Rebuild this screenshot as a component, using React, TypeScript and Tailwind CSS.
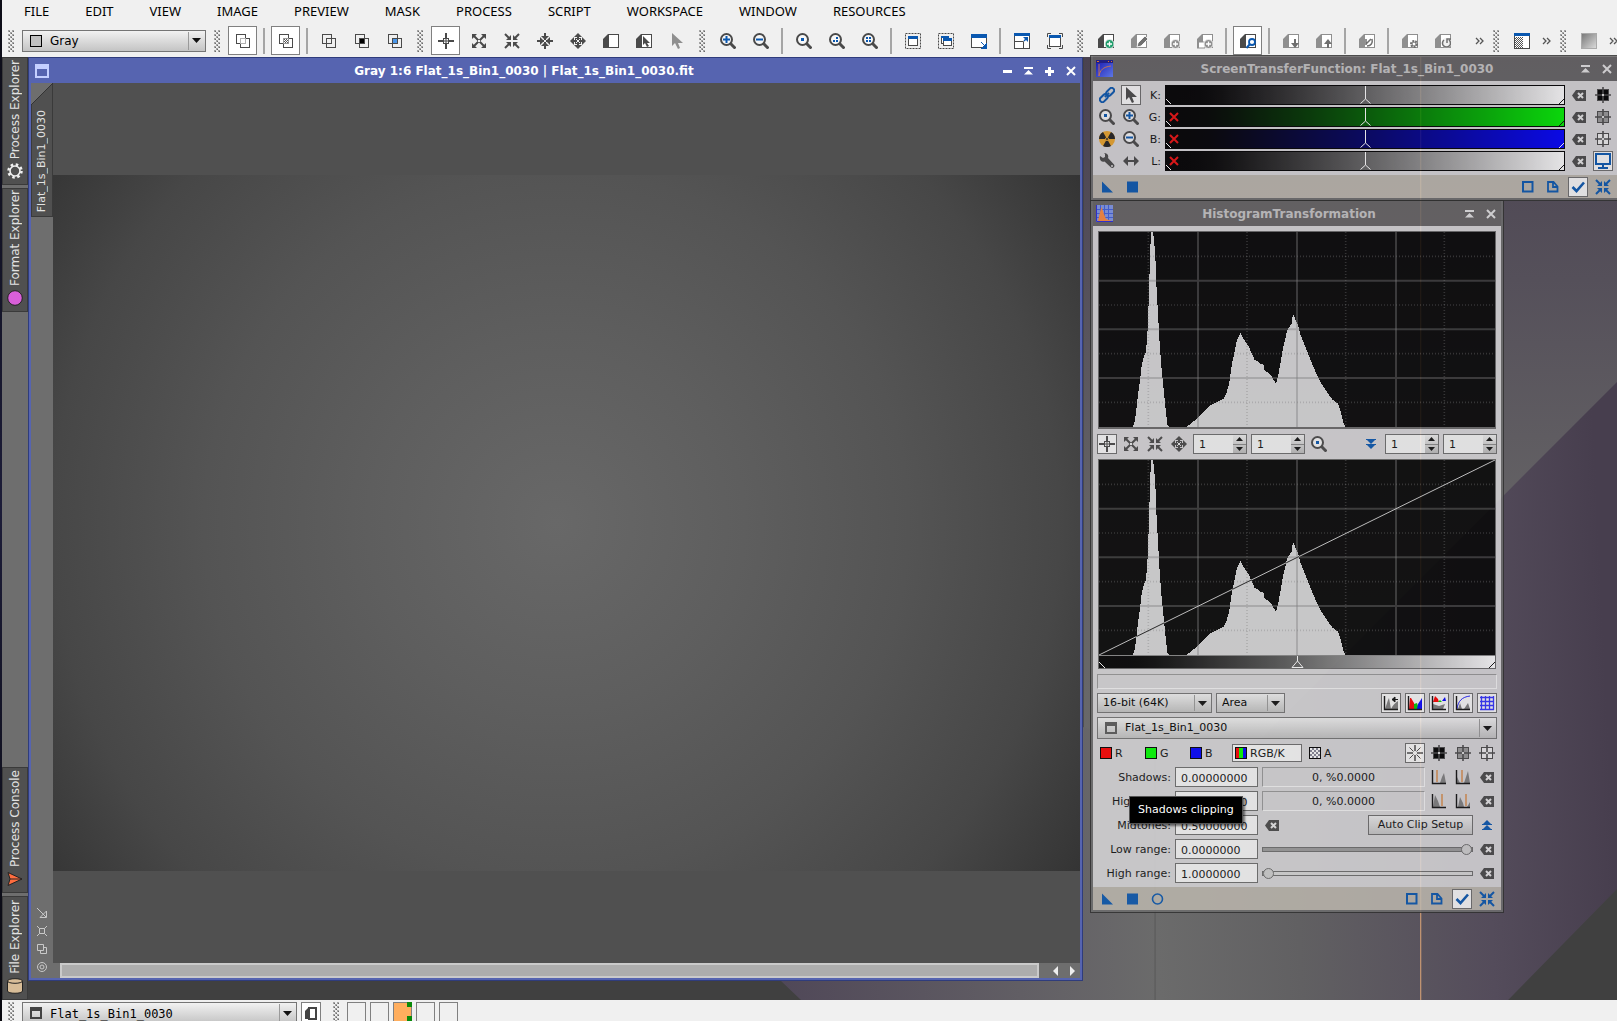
import type { ReactNode } from "react";

type IconProps = { color?: string };

function Svg({ children, size = 16 }: { children: ReactNode; size?: number }) {
  return (
    <svg width={size} height={size} viewBox="0 0 16 16" fill="none" aria-hidden="true" className="shrink-0">
      {children}
    </svg>
  );
}

const DARK = "#4a4a4a";
const BLUE = "#0a58b0";
const GREY = "#8f8f8f";

/* ---------- pointer / view icons ---------- */

function TargetIcon() {
  return (
    <Svg>
      <path d="M8 0v5M8 11v5M0 8h5M11 8h5" stroke={DARK} strokeWidth="2" />
      <path d="M8 4v8M4 8h8" stroke={DARK} />
      <rect x="5.5" y="5.5" width="5" height="5" stroke={DARK} />
    </Svg>
  );
}

function ExpandIcon() {
  return (
    <Svg>
      <path d="M1 1h5L1 6zM15 1v5l-5-5zM1 15v-5l5 5zM15 15h-5l5-5z" fill={DARK} />
      <path d="M3 3l10 10M13 3L3 13" stroke={DARK} strokeWidth="2" />
      <rect x="7" y="7" width="2" height="2" fill="#eee" />
    </Svg>
  );
}

function ContractIcon({ color = DARK }: IconProps) {
  return (
    <Svg>
      <path d="M7 7H2l5-5zM9 7V2l5 5zM7 9v5L2 9zM9 9h5l-5 5z" fill={color} />
      <path d="M1 1l4 4M15 1l-4 4M1 15l4-4M15 15l-4-4" stroke={color} strokeWidth="2" />
    </Svg>
  );
}

function PinchIcon() {
  return (
    <Svg>
      <path d="M8 7L4 3h8zM8 9l4 4H4zM7 8l-4 4V4zM9 8l4-4v8z" fill={DARK} />
      <path d="M8 0v16M0 8h16" stroke={DARK} strokeWidth="2" />
      <rect x="7" y="7" width="2" height="2" fill="#eee" />
    </Svg>
  );
}

function MoveIcon() {
  return (
    <Svg>
      <path d="M8 0l4 4H4zM8 16l-4-4h8zM0 8l4-4v8zM16 8l-4 4V4z" fill={DARK} />
      <path d="M8 3v10M3 8h10" stroke={DARK} strokeWidth="2" />
      <rect x="5.5" y="5.5" width="5" height="5" stroke={DARK} />
      <rect x="7" y="7" width="2" height="2" fill="#eee" />
    </Svg>
  );
}

function ArrowIcon({ color = DARK }: IconProps) {
  return (
    <Svg>
      <path d="M3 0v13l3-3 3 6 2-1-2-5h5z" fill={color} />
    </Svg>
  );
}

function ZoomIcon({ children }: { children?: ReactNode }) {
  return (
    <Svg>
      <circle cx="6.5" cy="6.5" r="5.5" fill="#f8f8f8" stroke={DARK} strokeWidth="2" />
      <path d="M10.5 10.5l5 5" stroke={DARK} strokeWidth="3" />
      {children}
    </Svg>
  );
}

const ZoomInIcon = () => (
  <ZoomIcon>
    <path d="M6.5 3v7M3 6.5h7" stroke={BLUE} strokeWidth="2" />
  </ZoomIcon>
);
const ZoomOutIcon = () => (
  <ZoomIcon>
    <path d="M3 6.5h7" stroke={BLUE} strokeWidth="2" />
  </ZoomIcon>
);
const ZoomOneIcon = () => (
  <ZoomIcon>
    <rect x="5" y="5" width="3" height="3" fill={BLUE} />
  </ZoomIcon>
);
const ZoomHalfIcon = () => (
  <ZoomIcon>
    <path d="M4 7h2v2H4zM7 4h2v2H7zM7 7h2v2H7z" fill={BLUE} />
  </ZoomIcon>
);
const ZoomFourIcon = () => (
  <ZoomIcon>
    <path d="M4 4h2v2H4zM7 4h2v2H7zM4 7h2v2H4zM7 7h2v2H7z" fill={BLUE} />
  </ZoomIcon>
);

function MaskIcon({ fill, inner = DARK }: { fill: string; inner?: string }) {
  return (
    <Svg>
      <defs>
        <pattern id="mask-dots" width="2" height="2" patternUnits="userSpaceOnUse">
          <path d="M0 0h1v1H0zM1 1h1v1H1z" fill="#555" />
        </pattern>
      </defs>
      <rect x="1.5" y="1.5" width="9" height="9" stroke={DARK} />
      <rect x="5.5" y="5.5" width="9" height="9" stroke={DARK} />
      <rect x="5.5" y="5.5" width="5" height="5" fill={fill} stroke={inner} />
    </Svg>
  );
}

/* ---------- document icons ---------- */

function DocIcon({ color = DARK, children }: { color?: string; children?: ReactNode }) {
  return (
    <Svg>
      <path d="M5 1L0 6v9h5z" fill={color} />
      <rect x="5.5" y="1.5" width="10" height="13" fill="#fff" stroke={color} />
      {children}
    </Svg>
  );
}

function Badge({ color }: { color: string }) {
  return (
    <>
      <circle cx="11.5" cy="11" r="4.5" fill={color} stroke="#f0f0f0" />
      <path d="M11.5 8.5v5M9 11h5" stroke="#fff" strokeWidth="1.3" />
    </>
  );
}

/* ---------- window icons ---------- */

function SelectWindowIcon({ twice }: { twice?: boolean }) {
  return (
    <Svg>
      <rect x="0.5" y="0.5" width="15" height="15" stroke={DARK} strokeDasharray="2 1" />
      {twice && (
        <>
          <rect x="3.5" y="3.5" width="7" height="7" fill="#fff" stroke={DARK} />
          <rect x="3" y="3" width="8" height="2" fill={BLUE} />
        </>
      )}
      <rect x={twice ? 5.5 : 3.5} y={twice ? 5.5 : 3.5} width={twice ? 8 : 9} height={twice ? 7 : 9} fill="#fff" stroke={DARK} />
      <rect x={twice ? 5 : 3} y={twice ? 5 : 3} width={twice ? 9 : 10} height="3" fill={BLUE} />
    </Svg>
  );
}

function ResizeWindowIcon() {
  return (
    <Svg>
      <rect x="0.5" y="1.5" width="15" height="13" fill="#fff" stroke={DARK} />
      <rect x="0" y="1" width="16" height="4" fill={BLUE} />
      <path d="M10 9l4 4M16 10v6h-6z" stroke={BLUE} fill={BLUE} />
    </Svg>
  );
}

function GrowWindowIcon() {
  return (
    <Svg>
      <rect x="0.5" y="0.5" width="15" height="15" fill="#fff" stroke={DARK} />
      <rect x="0" y="0" width="16" height="3" fill={BLUE} />
      <path d="M.5 8.5h9v7" stroke={DARK} />
      <path d="M10 8l3-3" stroke={BLUE} strokeWidth="1.5" />
      <path d="M9 4h5v5z" fill={BLUE} />
    </Svg>
  );
}

function FitWindowIcon() {
  return (
    <Svg>
      <path d="M.5 4V.5H4M12 .5h3.5V4M15.5 12v3.5H12M4 15.5H.5V12" stroke={DARK} />
      <rect x="2.5" y="2.5" width="11" height="11" fill="#fff" stroke={DARK} />
      <rect x="2" y="2" width="12" height="3" fill={BLUE} />
    </Svg>
  );
}

function SplitWindowIcon() {
  return (
    <Svg>
      <rect x="0.5" y="0.5" width="15" height="15" fill="#fff" stroke={DARK} />
      <rect x="1" y="4" width="8" height="11" fill="url(#mask-dots)" />
      <rect x="0" y="0" width="16" height="3" fill={BLUE} />
    </Svg>
  );
}

function GradientIcon() {
  return (
    <Svg>
      <defs>
        <linearGradient id="grey-ramp" x2="1" y2="1">
          <stop stopColor="#777" />
          <stop offset="1" stopColor="#ddd" />
        </linearGradient>
      </defs>
      <rect x="0.5" y="0.5" width="15" height="15" fill="url(#grey-ramp)" stroke="#aaa" />
    </Svg>
  );
}

function FrameIcon({ color = "#5a5a5a" }: IconProps) {
  return (
    <svg width="12" height="12" viewBox="0 0 12 12" aria-hidden="true">
      <path d="M0 0h12v12H0zM2 4v6h8V4z" fill={color} fillRule="evenodd" />
    </svg>
  );
}

/* ---------- process panel icons ---------- */

function ClearIcon() {
  return (
    <Svg>
      <path d="M5 3h10v11H5L1 8.5z" fill={DARK} />
      <path d="M7 6l5 5M12 6l-5 5" stroke="#e8e8e8" strokeWidth="2" />
    </Svg>
  );
}

function PointIcon({ fill }: { fill: string }) {
  return (
    <Svg>
      <rect x="2.5" y="2.5" width="11" height="11" fill={fill} stroke={DARK} />
      <path d="M8 0v16M0 8h16" stroke={DARK} strokeWidth="1.6" />
      <rect x="7" y="7" width="2" height="2" fill="#ddd" />
    </Svg>
  );
}

function RaysIcon() {
  return (
    <Svg>
      <path d="M8 0v6M8 10v6M0 8h6M10 8h6" stroke={DARK} strokeWidth="1.5" />
      <path d="M2.5 2.5l4 4M13.5 2.5l-4 4M2.5 13.5l4-4M13.5 13.5l-4-4" stroke={DARK} />
    </Svg>
  );
}

function LinkIcon() {
  return (
    <Svg>
      <g transform="rotate(-45 8 8)" stroke={BLUE} strokeWidth="2">
        <rect x="-1" y="5.5" width="9" height="5" rx="2.5" />
        <rect x="8" y="5.5" width="9" height="5" rx="2.5" />
        <path d="M5 8h6" />
      </g>
    </Svg>
  );
}

function NuclearIcon() {
  return (
    <Svg>
      <circle cx="8" cy="8" r="8" fill="#eca62c" />
      <path d="M8 8L0 8A8 8 0 0 1 4 1.1zM8 8l4-6.9A8 8 0 0 1 16 8zM8 8l4 6.9a8 8 0 0 1-8 0z" fill="#222" />
      <circle cx="8" cy="8" r="1.5" fill="#222" stroke="#eca62c" />
    </Svg>
  );
}

function WrenchIcon() {
  return (
    <Svg>
      <path
        d="M1 3l3 2 2-1V1L5 0c3 0 5 2 4 5l6 6.5c1.500 2-1 4.500-3 3L5.500 8.500C3 9.500 0 7.500 1 3z"
        fill={DARK}
      />
      <circle cx="13" cy="13" r="1" fill="#ddd" />
    </Svg>
  );
}

function SpanIcon() {
  return (
    <Svg>
      <path d="M0 8l5-5v10zM16 8l-5 5V3z" fill={DARK} />
      <path d="M3 8h10" stroke={DARK} strokeWidth="2" />
    </Svg>
  );
}

function MonitorIcon() {
  return (
    <Svg>
      <rect x="1" y="1" width="14" height="10" stroke={BLUE} strokeWidth="2" />
      <path d="M8 11v3M3 15h10" stroke={BLUE} strokeWidth="2" />
    </Svg>
  );
}

const TriangleIcon = () => (
  <Svg>
    <path d="M3 2.5v11h11z" fill={BLUE} />
  </Svg>
);
const SolidSquareIcon = () => (
  <Svg>
    <rect x="3" y="2.5" width="11" height="11" fill={BLUE} />
  </Svg>
);
const CircleIcon = () => (
  <Svg>
    <circle cx="8.5" cy="8" r="5" stroke={BLUE} strokeWidth="1.6" />
  </Svg>
);
const HollowSquareIcon = () => (
  <Svg>
    <rect x="3" y="3" width="9.5" height="9.5" stroke={BLUE} strokeWidth="2" />
  </Svg>
);
const PageIcon = () => (
  <Svg>
    <path d="M3 3h5.500L12.500 7.500v5H3zM8 3v5h4.500" stroke={BLUE} strokeWidth="1.8" />
  </Svg>
);
const CheckIcon = () => (
  <Svg>
    <path d="M2.500 8l4 4 7.500-8.500" stroke={BLUE} strokeWidth="2.6" />
  </Svg>
);

function ChevronPairIcon({ up }: { up?: boolean }) {
  return (
    <Svg>
      <g fill={BLUE} transform={up ? "rotate(180 8 8)" : undefined}>
        <rect x="3" y="3" width="10" height="1" />
        <path d="M4 4h8L8 8z" />
        <rect x="3" y="8" width="10" height="1" />
        <path d="M4 9h8l-4 4z" />
      </g>
    </Svg>
  );
}

function MiniGraph({ children }: { children: ReactNode }) {
  return (
    <Svg>
      {children}
      <path d="M1.500 1v13.500H15" stroke="#111" strokeWidth="1.4" />
    </Svg>
  );
}

const REJECT_GREY = "#808080";

/* ---------- shared controls ---------- */

function Grip() {
  return (
    <svg width="6" height="22" aria-hidden="true" className="mx-1 shrink-0">
      <defs>
        <pattern id="grip" width="6" height="4" patternUnits="userSpaceOnUse">
          <path d="M0 0h2v2H0zM4 0h2v2H4zM2 2h2v2H2z" fill="#a4a4a4" />
          <path d="M1 1h1v1H1zM5 1h1v1H5zM3 3h1v1H3z" fill="#6b6b6b" />
        </pattern>
      </defs>
      <rect width="6" height="22" fill="url(#grip)" />
    </svg>
  );
}

function Separator() {
  return <span className="mx-0.5 h-[26px] w-0.5 shrink-0 bg-[#a5a5a5]" />;
}

function ToolButton({ label, active, children }: { label: string; active?: boolean; children: ReactNode }) {
  return (
    <button
      type="button"
      aria-label={label}
      className={`flex size-[29px] shrink-0 items-center justify-center ${
        active ? "border border-[#808080] bg-white" : ""
      }`}
    >
      {children}
    </button>
  );
}

function PanelButton({ label, active, children }: { label: string; active?: boolean; children: ReactNode }) {
  return (
    <button
      type="button"
      aria-label={label}
      className={`flex size-5 shrink-0 items-center justify-center ${
        active ? "border border-[#6e6e6e] bg-[#fafafa]" : ""
      }`}
    >
      {children}
    </button>
  );
}

function DropDown({
  label,
  value,
  className,
  icon,
  text = "",
}: {
  label: string;
  value: string;
  className: string;
  icon?: ReactNode;
  text?: string;
}) {
  return (
    <div className={`relative ${className}`}>
      <select
        aria-label={label}
        className={`block h-full w-full appearance-none border border-[#757575] bg-linear-to-b from-[#f2f2f2] to-[#c4c4c4] pt-px text-black outline-none ${
          icon ? "pl-[27px]" : "pl-[5px]"
        } ${text}`}
      >
        <option>{value}</option>
      </select>
      {icon && <span className="pointer-events-none absolute inset-y-0 left-2 flex items-center">{icon}</span>}
      <span className="pointer-events-none absolute inset-y-0.5 right-[5px] flex items-center border-l border-[#9a9a9a] pl-[3px]">
        <svg width="9" height="5" viewBox="0 0 9 5">
          <path d="M0 0h9L4.500 5z" fill="#111" />
        </svg>
      </span>
    </div>
  );
}

function Spinner({ label }: { label: string }) {
  return (
    <div className="flex h-5 w-[54px] border border-[#6e6e6e] bg-[#f6f6f6]">
      <input aria-label={label} defaultValue="1" className="w-0 min-w-0 flex-1 bg-transparent pt-0.5 pl-[5px] outline-none" />
      <div className="flex w-[13px] flex-col bg-linear-to-b from-[#efefef] to-[#bdbdbd]">
        <button type="button" aria-label={`${label} up`} className="flex flex-1 items-center justify-center">
          <svg width="7" height="4" viewBox="0 0 7 4">
            <path d="M0 4h7L3.500 0z" fill="#111" />
          </svg>
        </button>
        <button
          type="button"
          aria-label={`${label} down`}
          className="flex flex-1 items-center justify-center border-t border-[#8a8a8a]"
        >
          <svg width="7" height="4" viewBox="0 0 7 4">
            <path d="M0 0h7L3.500 4z" fill="#111" />
          </svg>
        </button>
      </div>
    </div>
  );
}

/* ---------- top bars ---------- */

const MENUS = [
  "FILE",
  "EDIT",
  "VIEW",
  "IMAGE",
  "PREVIEW",
  "MASK",
  "PROCESS",
  "SCRIPT",
  "WORKSPACE",
  "WINDOW",
  "RESOURCES",
];

function MenuBar() {
  return (
    <nav className="flex h-[21px] items-center gap-9 bg-[#f0f0f0] pl-[22px] font-['Noto_Sans',sans-serif] text-[13px] leading-5 text-black">
      {MENUS.map((m) => (
        <button key={m} type="button">
          {m}
        </button>
      ))}
    </nav>
  );
}

function MoreButton({ wide }: { wide?: boolean }) {
  return (
    <button
      type="button"
      aria-label="More"
      className={`flex w-3 shrink-0 justify-center ${wide ? "ml-3" : ""}`}
    >
      <svg width="9" height="8" viewBox="0 0 9 8" fill="none">
        <path d="M1 1l3 3-3 3M5 1l3 3-3 3" stroke="#555" strokeWidth="1.3" />
      </svg>
    </button>
  );
}

function ToolBar() {
  return (
    <div className="flex h-9 items-center gap-1 overflow-hidden bg-[#f0f0f0] pt-[3px] pl-0.5">
      <Grip />
      <DropDown
        label="Display channel"
        value="Gray"
        className="h-[22px] w-[184px] shrink-0"
        text="text-xs"
        icon={<span className="size-3 border border-black bg-[#c0c0c0]" />}
      />
      <Grip />
      <ToolButton label="Mask visible" active>
        <MaskIcon fill="#fff" inner="#b0b0b0" />
      </ToolButton>
      <Separator />
      <ToolButton label="Mask enabled" active>
        <MaskIcon fill="url(#mask-dots)" inner="#9a9a9a" />
      </ToolButton>
      <Separator />
      <ToolButton label="Show mask"><MaskIcon fill="#f0f0f0" /></ToolButton>
      <ToolButton label="Invert mask"><MaskIcon fill="#000" /></ToolButton>
      <ToolButton label="Select mask"><MaskIcon fill="#4a96e8" /></ToolButton>
      <Grip />
      <ToolButton label="Readout" active><TargetIcon /></ToolButton>
      <ToolButton label="Expand"><ExpandIcon /></ToolButton>
      <ToolButton label="Contract"><ContractIcon /></ToolButton>
      <ToolButton label="Center"><PinchIcon /></ToolButton>
      <ToolButton label="Pan"><MoveIcon /></ToolButton>
      <ToolButton label="New preview"><DocIcon /></ToolButton>
      <ToolButton label="Edit preview">
        <DocIcon>
          <path d="M7 3v9l2-2 2 4 2-1-2-3h3z" fill={DARK} />
        </DocIcon>
      </ToolButton>
      <ToolButton label="Pointer"><ArrowIcon color={GREY} /></ToolButton>
      <Grip />
      <ToolButton label="Zoom in"><ZoomInIcon /></ToolButton>
      <ToolButton label="Zoom out"><ZoomOutIcon /></ToolButton>
      <Separator />
      <ToolButton label="Zoom 1:1"><ZoomOneIcon /></ToolButton>
      <ToolButton label="Zoom 1:2"><ZoomHalfIcon /></ToolButton>
      <ToolButton label="Zoom 1:4"><ZoomFourIcon /></ToolButton>
      <Separator />
      <ToolButton label="Fit view"><SelectWindowIcon /></ToolButton>
      <ToolButton label="Fit all"><SelectWindowIcon twice /></ToolButton>
      <ToolButton label="Resize"><ResizeWindowIcon /></ToolButton>
      <Separator />
      <ToolButton label="Grow"><GrowWindowIcon /></ToolButton>
      <ToolButton label="Fit window"><FitWindowIcon /></ToolButton>
      <Grip />
      <ToolButton label="Create preview">
        <DocIcon><Badge color="#1f9d6b" /></DocIcon>
      </ToolButton>
      <ToolButton label="Modify preview">
        <DocIcon color={GREY}>
          <path d="M6 14l1-4 7-7 3 3-7 7z" fill="#6f6f6f" stroke="#fff" strokeWidth=".8" />
        </DocIcon>
      </ToolButton>
      <ToolButton label="Store preview">
        <DocIcon color={GREY}><Badge color={GREY} /></DocIcon>
      </ToolButton>
      <ToolButton label="Append preview">
        <DocIcon color={GREY}>
          <path d="M2 9h6v6H0v-4z" fill="#fff" stroke={GREY} />
          <path d="M2 9v6H0v-4z" fill={GREY} />
          <Badge color={GREY} />
        </DocIcon>
      </ToolButton>
      <Separator />
      <ToolButton label="Preview zoom" active>
        <DocIcon>
          <circle cx="12" cy="9" r="3" stroke={BLUE} strokeWidth="1.8" fill="#fff" />
          <path d="M10 11l-3.500 4" stroke={BLUE} strokeWidth="2" />
        </DocIcon>
      </ToolButton>
      <Separator />
      <ToolButton label="Store">
        <DocIcon color={GREY}>
          <path d="M12 6v6" stroke="#6f6f6f" strokeWidth="2" />
          <path d="M8 10l4 5 4-5z" fill="#6f6f6f" />
        </DocIcon>
      </ToolButton>
      <ToolButton label="Restore">
        <DocIcon color={GREY}>
          <path d="M12 15V9" stroke="#6f6f6f" strokeWidth="2" />
          <path d="M8 11l4-5 4 5z" fill="#6f6f6f" />
        </DocIcon>
      </ToolButton>
      <Separator />
      <ToolButton label="Undo">
        <DocIcon color={GREY}>
          <path d="M8 13c4 0 6-3 5-7M7 6v6M7 11l5-5" stroke="#6f6f6f" strokeWidth="1.5" />
        </DocIcon>
      </ToolButton>
      <Separator />
      <ToolButton label="Settings">
        <DocIcon color={GREY}>
          <circle cx="12" cy="11" r="3" stroke="#6f6f6f" strokeWidth="2" strokeDasharray="2 1" />
          <circle cx="12" cy="11" r="2" stroke="#6f6f6f" />
        </DocIcon>
      </ToolButton>
      <ToolButton label="Reset">
        <DocIcon color={GREY}>
          <circle cx="11.5" cy="10" r="5" fill="#f0f0f0" />
          <path d="M9 7a4 4 0 1 0 5 0M12 10V6h4" stroke="#6f6f6f" strokeWidth="1.5" />
        </DocIcon>
      </ToolButton>
      <MoreButton wide />
      <Grip />
      <ToolButton label="Swap"><SplitWindowIcon /></ToolButton>
      <MoreButton />
      <Grip />
      <ToolButton label="Gradient"><GradientIcon /></ToolButton>
      <MoreButton />
    </div>
  );
}

/* ---------- left dock ---------- */

function DockTab({ label, className, children }: { label: string; className: string; children: ReactNode }) {
  return (
    <button
      type="button"
      className={`flex w-[26px] flex-col items-center justify-end gap-1 border border-[#3a3a3a] bg-[#505050] pb-[5px] text-xs text-[#e2e2e2] ${className}`}
    >
      <span className="rotate-180 whitespace-nowrap leading-4 [writing-mode:vertical-rl]">{label}</span>
      {children}
    </button>
  );
}

function Dock() {
  return (
    <aside className="flex w-[26px] shrink-0 flex-col gap-[3px] bg-[#6e6e6e]">
      <DockTab label="Process Explorer" className="h-32">
        <Svg>
          <circle cx="8" cy="8" r="6.5" stroke="#f0f0f0" strokeWidth="2.5" strokeDasharray="2.5 2.6" />
          <circle cx="8" cy="8" r="5" stroke="#f0f0f0" strokeWidth="1.6" />
        </Svg>
      </DockTab>
      <DockTab label="Format Explorer" className="h-[124px]">
        <Svg>
          <circle cx="8" cy="8" r="7.3" fill="#d95fd9" stroke="#222" />
        </Svg>
      </DockTab>
      <div className="flex-1" />
      <DockTab label="Process Console" className="h-[126px]">
        <Svg>
          <path d="M1 1.500L15 8 1 14.500 3 8z" fill="#ff6d3f" stroke="#222" />
          <path d="M3 8h12" stroke="#222" />
        </Svg>
      </DockTab>
      <DockTab label="File Explorer" className="h-[104px]">
        <Svg>
          <path d="M.5 3v10c0 3 15 3 15 0V3z" fill="#d8bd98" stroke="#222" />
          <ellipse cx="8" cy="3" rx="7.5" ry="2.3" fill="#d8bd98" stroke="#222" />
        </Svg>
      </DockTab>
    </aside>
  );
}

/* ---------- image window ---------- */

function ShadeIcon() {
  return (
    <svg width="9" height="8" viewBox="0 0 9 8" aria-hidden="true">
      <path d="M0 0h9v2H0zM4.500 3L9 7.500H0z" fill="currentColor" />
    </svg>
  );
}

function CloseIcon() {
  return (
    <svg width="10" height="10" viewBox="0 0 10 10" aria-hidden="true">
      <path d="M1 1l8 8M9 1L1 9" stroke="currentColor" strokeWidth="2" />
    </svg>
  );
}

function ImageWindow() {
  return (
    <section className="flex min-w-0 flex-1 flex-col border border-[#2f3c7c] bg-[#5664b0] px-0.5 pb-0.5">
      <header className="flex h-[25px] items-center px-1 text-white">
        <svg width="14" height="14" viewBox="0 0 14 14" aria-hidden="true">
          <path d="M0 0h14v14H0zM2 5v7h10V5z" fill="#c4cfff" fillRule="evenodd" />
        </svg>
        <h1 className="flex-1 pr-1 text-center text-xs font-bold">
          Gray 1:6 Flat_1s_Bin1_0030 | Flat_1s_Bin1_0030.fit
        </h1>
        <div className="flex items-center gap-3">
          <button type="button" aria-label="Iconize">
            <svg width="9" height="10" viewBox="0 0 9 10"><path d="M0 4h9v3H0z" fill="currentColor" /></svg>
          </button>
          <button type="button" aria-label="Shade"><ShadeIcon /></button>
          <button type="button" aria-label="Maximize">
            <svg width="9" height="10" viewBox="0 0 9 10"><path d="M3 1h3v3h3v3H6v3H3V7H0V4h3z" fill="currentColor" /></svg>
          </button>
          <button type="button" aria-label="Close"><CloseIcon /></button>
        </div>
      </header>
      <div className="flex flex-1">
        <div className="flex w-[22px] flex-col justify-between bg-[#6e6e6e]">
          <button
            type="button"
            className="relative flex h-[134px] w-full items-end justify-center border border-[#3a3a3a] bg-[#505050] pb-1 text-[#e2e2e2]"
          >
            <svg width="22" height="22" viewBox="0 0 22 22" className="absolute -top-px -left-px" aria-hidden="true">
              <path d="M0 0h22L0 22z" fill="#6e6e6e" />
              <path d="M22 0L0 22" stroke="#333" />
            </svg>
            <span className="rotate-180 whitespace-nowrap leading-4 [writing-mode:vertical-rl]">Flat_1s_Bin1_0030</span>
          </button>
          <div className="flex flex-col items-center gap-2 pb-1.5 text-[#c8c8c8]">
            <svg width="10" height="10" viewBox="0 0 10 10" fill="none" stroke="currentColor">
              <path d="M0 0l9 9M9.500 3v6.500H3z" />
            </svg>
            <svg width="10" height="10" viewBox="0 0 10 10" fill="none" stroke="currentColor">
              <path d="M0 0l2.500 2.500h5L10 0M0 10l2.500-2.500h5L10 10M2.500 2.500v5M7.500 2.500v5" />
            </svg>
            <svg width="10" height="10" viewBox="0 0 10 10" fill="none" stroke="currentColor">
              <path d="M.5.500h6v6h-6zM6.500 3.500h3v6h-6v-3" />
            </svg>
            <svg width="10" height="10" viewBox="0 0 10 10" fill="none" stroke="currentColor">
              <circle cx="5" cy="5" r="4.5" />
              <circle cx="5" cy="5" r="2" />
            </svg>
          </div>
        </div>
        <div className="flex min-w-0 flex-1 flex-col bg-[#505050]">
          <div className="flex flex-1 flex-col py-[92px]">
            <div
              role="img"
              aria-label="Flat_1s_Bin1_0030"
              className="flex-1 bg-[radial-gradient(circle_farthest-corner_at_49%_50%,#686868_0%,#5e5e5e_30%,#545454_56%,#474747_80%,#343434_100%)]"
            />
          </div>
          <div className="flex h-[15px] bg-[#6e6e6e] pl-[7px]">
            <div className="flex-1 border-2 border-[#cacaca] bg-[#adadad]" />
            <div className="flex w-[41px] items-center justify-center gap-3 pl-2">
              <button type="button" aria-label="Scroll left">
                <svg width="5" height="10" viewBox="0 0 5 10"><path d="M5 0v10L0 5z" fill="#eee" /></svg>
              </button>
              <button type="button" aria-label="Scroll right">
                <svg width="5" height="10" viewBox="0 0 5 10"><path d="M0 0v10l5-5z" fill="#eee" /></svg>
              </button>
            </div>
          </div>
        </div>
      </div>
    </section>
  );
}

/* ---------- process panels ---------- */

function PanelTitle({ title, icon }: { title: string; icon: ReactNode }) {
  return (
    <header className="flex h-[25px] items-center bg-[#666465] px-[3px] text-[#e4e4e4]">
      {icon}
      <h2 className="flex-1 text-center text-xs font-bold text-[#c6c6c6]">{title}</h2>
      <div className="flex items-center gap-3 pr-0.5">
        <button type="button" aria-label="Shade"><ShadeIcon /></button>
        <button type="button" aria-label="Close"><CloseIcon /></button>
      </div>
    </header>
  );
}

function PanelFooter({ global }: { global?: boolean }) {
  return (
    <footer className="flex h-[23px] items-center gap-[5px] bg-[#bcb7ae] px-1">
      <PanelButton label="New instance"><TriangleIcon /></PanelButton>
      <PanelButton label="Apply"><SolidSquareIcon /></PanelButton>
      {global && <PanelButton label="Apply global"><CircleIcon /></PanelButton>}
      <div className="flex-1" />
      <PanelButton label="Browse documentation"><HollowSquareIcon /></PanelButton>
      <PanelButton label="Edit instance"><PageIcon /></PanelButton>
      <PanelButton label="Track view" active><CheckIcon /></PanelButton>
      <PanelButton label="Reset"><ContractIcon color={BLUE} /></PanelButton>
    </footer>
  );
}

const STF_ROWS = [
  { name: "K", ramp: "bg-linear-to-r from-black to-white", off: false, a: <LinkIcon />, b: <ArrowIcon />, point: "#000" },
  { name: "G", ramp: "bg-linear-to-r from-black to-[#00f000]", off: true, a: <ZoomOneIcon />, b: <ZoomInIcon />, point: "#999" },
  { name: "B", ramp: "bg-linear-to-r from-black to-[#0000ff]", off: true, a: <NuclearIcon />, b: <ZoomOutIcon />, point: "#eee" },
  { name: "L", ramp: "bg-linear-to-r from-black to-white", off: true, a: <WrenchIcon />, b: <SpanIcon />, point: "" },
];

function ScreenTransferFunction() {
  return (
    <section className="border border-r-0 border-[#303030] bg-[#6e6e6e] pb-0.5 pl-0.5 opacity-85">
      <PanelTitle
        title="ScreenTransferFunction: Flat_1s_Bin1_0030"
        icon={
          <svg width="17" height="17" viewBox="0 0 17 17" aria-hidden="true">
            <defs>
              <linearGradient id="stf-icon" x2="1" y2="1">
                <stop stopColor="#1010c0" />
                <stop offset="1" stopColor="#6080ff" />
              </linearGradient>
            </defs>
            <rect width="17" height="17" fill="url(#stf-icon)" />
            <rect width="17" height="3" fill="#1a1a8c" />
            <path d="M1 1.500h2M12 1.500h1M15 1.500h1" stroke="#ff7a2a" />
            <path d="M3 4v12M3 16c1-6 4-9 12-10" stroke="#d77a5a" fill="none" />
          </svg>
        }
      />
      <div className="flex flex-col gap-0.5 bg-[#d8d7d9] p-1">
        {STF_ROWS.map((row) => (
          <div key={row.name} className="flex h-5 items-center gap-1">
            <PanelButton label={`${row.name} tool`}>{row.a}</PanelButton>
            <PanelButton label={`${row.name} mode`} active={row.name === "K"}>{row.b}</PanelButton>
            <span className="w-4 pt-0.5 text-right">{row.name}:</span>
            <div className={`relative flex h-full flex-1 items-center border border-black ${row.ramp}`}>
              {row.off && (
                <svg width="10" height="10" viewBox="0 0 10 10" className="ml-[3px]">
                  <path d="M1 1l8 8M9 1L1 9" stroke="#f01010" strokeWidth="2" />
                </svg>
              )}
              <svg width="11" height="18" viewBox="0 0 11 18" className="absolute inset-x-0 bottom-0 mx-auto" fill="none">
                <path d="M5.500 0v13M.5 17.500l5-4.500 5 4.500" stroke="#fff" />
              </svg>
              <svg width="6" height="5" viewBox="0 0 6 5" className="absolute bottom-0 left-0" fill="none">
                <path d="M0 0l5 5" stroke="#fff" />
              </svg>
              <svg width="6" height="5" viewBox="0 0 6 5" className="absolute right-0 bottom-0" fill="none">
                <path d="M6 0L1 5" stroke={row.name === "B" ? "#fff" : "#111"} />
              </svg>
            </div>
            <PanelButton label={`Reset ${row.name}`}><ClearIcon /></PanelButton>
            <PanelButton label={`${row.name} point`} active={!row.point}>
              {row.point ? <PointIcon fill={row.point} /> : <MonitorIcon />}
            </PanelButton>
          </div>
        ))}
      </div>
      <PanelFooter />
    </section>
  );
}

const CURVE =
  "M157 711L163 700 168 670 172 630 180 570 184 535 190 505 197 488 200 460 204 400 206 330 208 270 211 170 214 126H219L222 150 226 200 229 280 234 370 239 460 245 540 251 600 257 660 262 703 267 711ZM318 711L332 702 350 686 372 664 390 647 412 636 432 625 440 607 447 582 452 550 456 520 464 485 471 450 477 438 482 428 487 440 497 456 505 467 515 490 524 510 534 513 541 522 550 524 554 542 564 548 574 557 580 568 586 578 590 577 596 550 602 515 608 480 614 455 621 422 628 411 635 401 638 376 642 376 646 389 655 408 662 436 672 460 684 490 697 524 712 557 724 580 738 602 757 629 774 641 783 668 790 697 797 711Z";

function HistogramPlot({ id, diagonal }: { id: string; diagonal?: boolean }) {
  const quarters = [1, 2, 3];
  const eighths = [1, 3, 5, 7];
  return (
    <svg viewBox="57 126 1188 585" preserveAspectRatio="none" className="block h-[195px] w-full" aria-label={id}>
      <rect x="57" y="126" width="1188" height="585" fill="#050505" />
      <path d={CURVE} fill="#d9d9da" shapeRendering="crispEdges" />
      <g fill="none" stroke="#828282" strokeOpacity=".4">
        {quarters.map((q) => (
          <path key={q} d={`M57 ${126 + q * 146}h1188M${57 + q * 297} 126v585`} strokeWidth="6" />
        ))}
        {eighths.map((q) => (
          <path
            key={q}
            d={`M57 ${126 + q * 73}h1188M${57 + q * 148} 126v585`}
            strokeWidth="5"
            strokeDasharray="3 6"
            strokeOpacity=".35"
          />
        ))}
      </g>
      {diagonal && (
        <>
          <clipPath id="curve-clip">
            <path d={CURVE} />
          </clipPath>
          <path d="M57 711L1245 126" stroke="#ccc" strokeWidth="3" />
          <path d="M57 711L1245 126" stroke="#222" strokeWidth="3" clipPath="url(#curve-clip)" />
        </>
      )}
    </svg>
  );
}

function Swatch({ className }: { className: string }) {
  return <span className={`size-3 shrink-0 border border-black ${className}`} />;
}

const CHANNELS = [
  { name: "R", swatch: "bg-[#ff0000]", box: "w-[41px]", active: false },
  { name: "G", swatch: "bg-[#00ff00]", box: "w-[41px]", active: false },
  { name: "B", swatch: "bg-[#0000ff]", box: "w-[41px]", active: false },
  {
    name: "RGB/K",
    swatch: "bg-[linear-gradient(90deg,#f00_33%,#0f0_33%,#0f0_66%,#00f_66%)]",
    box: "w-[70px]",
    active: true,
  },
  {
    name: "A",
    swatch: "bg-[repeating-conic-gradient(#889_0_25%,#fff_0_50%)] bg-size-[4px_4px]",
    box: "w-10",
    active: false,
  },
];

function ParamRow({ id, label, value, children }: { id: string; label: string; value: string; children: ReactNode }) {
  return (
    <div className="flex h-5 items-center gap-1">
      <label htmlFor={id} className="w-[74px] shrink-0 pt-0.5 text-right whitespace-nowrap">
        {label}
      </label>
      <input
        id={id}
        defaultValue={value}
        className="h-5 w-[83px] shrink-0 border border-[#6e6e6e] bg-[#f8f8f8] px-[5px] pt-0.5 outline-none"
      />
      {children}
    </div>
  );
}

function Readout() {
  return (
    <output className="flex h-5 flex-1 items-center justify-center border border-[#999] border-r-[#f5f5f5] border-b-[#f5f5f5] pt-0.5">
      0, %0.0000
    </output>
  );
}

function RangeSlider({ label, value, filled }: { label: string; value: number; filled?: boolean }) {
  return (
    <input
      type="range"
      aria-label={label}
      defaultValue={value}
      className={`h-[5px] min-w-0 flex-1 appearance-none border border-[#6e6e6e] [&::-webkit-slider-thumb]:size-[11px] [&::-webkit-slider-thumb]:appearance-none [&::-webkit-slider-thumb]:rounded-full [&::-webkit-slider-thumb]:border [&::-webkit-slider-thumb]:border-[#6e6e6e] [&::-webkit-slider-thumb]:bg-[#d0d0d0] ${
        filled ? "bg-[#9c9c9c]" : "bg-[#d8d8d8]"
      }`}
    />
  );
}

function HistogramTransformation() {
  return (
    <section className="border border-[#303030] bg-[#6e6e6e] px-0.5 pb-0.5 opacity-85">
      <PanelTitle
        title="HistogramTransformation"
        icon={
          <svg width="17" height="17" viewBox="0 0 17 17" aria-hidden="true">
            <rect width="17" height="17" fill="#8098e8" />
            <path d="M0 4.500h17M0 8.500h17M0 12.500h17M4.500 0v17M8.500 0v17M12.500 0v17" stroke="#4060e0" />
            <path d="M2 16l2-9 1.500-5L8 9l2 5 6 2z" fill="#ff8a3c" />
            <path d="M.5 0v16.500H17" stroke="#2a2ae0" fill="none" />
          </svg>
        }
      />
      <div className="flex flex-col gap-1 bg-[#d8d7d9] p-1">
        <div className="m-px border border-b-2 border-[#6a6a6a]">
          <HistogramPlot id="Input histogram" />
        </div>
        <div className="flex h-5 items-center gap-1">
          <PanelButton label="Readout" active><TargetIcon /></PanelButton>
          <PanelButton label="Zoom in"><ExpandIcon /></PanelButton>
          <PanelButton label="Zoom out"><ContractIcon /></PanelButton>
          <PanelButton label="Pan"><MoveIcon /></PanelButton>
          <Spinner label="Horizontal zoom" />
          <Spinner label="Vertical zoom" />
          <PanelButton label="Zoom 1:1"><ZoomOneIcon /></PanelButton>
          <div className="flex-1" />
          <PanelButton label="Collapse"><ChevronPairIcon /></PanelButton>
          <Spinner label="Input horizontal zoom" />
          <Spinner label="Input vertical zoom" />
        </div>
        <div className="m-px border border-[#6a6a6a]">
          <HistogramPlot id="Output histogram" diagonal />
          <div className="relative h-[13px] border-t border-[#8a8a8a] bg-linear-to-r from-black to-white">
            <svg width="7" height="7" viewBox="0 0 7 7" className="absolute bottom-0 left-0" fill="none">
              <path d="M0 1l6 6" stroke="#fff" />
            </svg>
            <svg width="13" height="12" viewBox="0 0 13 12" className="absolute inset-x-0 bottom-0 mx-auto" fill="none">
              <path d="M6.500 0v5M1 11.500L6.500 5l5.500 6.500z" stroke="#fff" />
            </svg>
            <svg width="7" height="7" viewBox="0 0 7 7" className="absolute right-0 bottom-0" fill="none">
              <path d="M7 1L1 7" stroke="#111" />
            </svg>
          </div>
        </div>
        <div className="h-[15px] border border-[#999] border-r-[#f5f5f5] border-b-[#f5f5f5]" />
        <div className="flex h-5 items-center gap-1">
          <DropDown label="Readout range" value="16-bit (64K)" className="h-5 w-[115px]" />
          <DropDown label="Plot style" value="Area" className="h-5 w-[69px]" />
          <div className="flex-1" />
          <PanelButton label="Reject saturated" active>
            <MiniGraph>
              <path d="M2 14l3-9 1-2 2 11zM8 14c2-4 4-6 7-8v8z" fill={REJECT_GREY} />
              <path d="M9 4.500h6M9 4.500l3-2.500v5z" stroke="#111" fill="#111" />
            </MiniGraph>
          </PanelButton>
          <PanelButton label="Raw RGB" active>
            <MiniGraph>
              <path d="M2 14l1-11h1l3 5 1 6z" fill="#f00" />
              <path d="M7 14V9l3-1 2 6z" fill="#0c0" />
              <path d="M10 14l1-5 4-6v11z" fill="#00f" />
            </MiniGraph>
          </PanelButton>
          <PanelButton label="All channels" active>
            <MiniGraph>
              <path d="M2 7l2-6 3 3 1 3z" fill="#f00" />
              <path d="M7 7l2-2 2 2z" fill="#0c0" />
              <path d="M11 6l3-4 1 4z" fill="#00f" />
              <path d="M2 14V9l6 2 6-2-2 5z" fill={REJECT_GREY} />
            </MiniGraph>
          </PanelButton>
          <PanelButton label="Show curve" active>
            <MiniGraph>
              <path d="M3 14l2-6 2 6zM9 14l4-6 2 6z" fill={REJECT_GREY} />
              <path d="M2 14C3 6 7 2 15 1" stroke="#22f" />
            </MiniGraph>
          </PanelButton>
          <PanelButton label="Show grid" active>
            <Svg>
              <path d="M1 2.500h14M1 6.500h14M1 10.500h14M1 14.500h14M2.500 1v14M6.500 1v14M10.500 1v14M14.500 1v14" stroke="#33f" strokeWidth="1.3" />
            </Svg>
          </PanelButton>
        </div>
        <DropDown label="Target view" value="Flat_1s_Bin1_0030" className="h-[22px]" icon={<FrameIcon />} />
        <div className="flex h-5 items-center gap-1">
          {CHANNELS.map((c) => (
            <button
              key={c.name}
              type="button"
              className={`flex h-[18px] items-center gap-[3px] border pl-0.5 ${c.box} ${
                c.active ? "border-[#6e6e6e] bg-[#fafafa]" : "border-transparent"
              }`}
            >
              <Swatch className={c.swatch} />
              <span className="pt-0.5">{c.name}</span>
            </button>
          ))}
          <div className="flex-1" />
          <PanelButton label="Real time" active><RaysIcon /></PanelButton>
          <PanelButton label="Black point"><PointIcon fill="#000" /></PanelButton>
          <PanelButton label="Grey point"><PointIcon fill="#999" /></PanelButton>
          <PanelButton label="White point"><PointIcon fill="#eee" /></PanelButton>
        </div>
        <ParamRow id="shadows" label="Shadows:" value="0.00000000">
          <Readout />
          <PanelButton label="Auto zero shadows">
            <MiniGraph>
              <path d="M9 14l2-6 2-4 2 10z" fill={REJECT_GREY} />
              <path d="M6 1v12" stroke="#d8a070" strokeWidth="2" />
            </MiniGraph>
          </PanelButton>
          <PanelButton label="Auto clip shadows">
            <MiniGraph>
              <path d="M2 14V8l3 6zM9 14l2-6 2-6 2 12z" fill={REJECT_GREY} />
              <path d="M7 1v12" stroke="#d8a070" strokeWidth="2" />
            </MiniGraph>
          </PanelButton>
          <PanelButton label="Reset shadows"><ClearIcon /></PanelButton>
        </ParamRow>
        <ParamRow id="highlights" label="Highlights:" value="0.00000000">
          <Readout />
          <PanelButton label="Auto zero highlights">
            <MiniGraph>
              <path d="M2 14l2-12 3 6 2 6z" fill={REJECT_GREY} />
              <path d="M11 1v12" stroke="#d8a070" strokeWidth="2" />
            </MiniGraph>
          </PanelButton>
          <PanelButton label="Auto clip highlights">
            <MiniGraph>
              <path d="M3 14l2-10 3 6 1 4zM12 14l3-5v5z" fill={REJECT_GREY} />
              <path d="M11 1v12" stroke="#d8a070" strokeWidth="2" />
            </MiniGraph>
          </PanelButton>
          <PanelButton label="Reset highlights"><ClearIcon /></PanelButton>
        </ParamRow>
        <ParamRow id="midtones" label="Midtones:" value="0.50000000">
          <PanelButton label="Reset midtones"><ClearIcon /></PanelButton>
          <div className="flex-1" />
          <button
            type="button"
            className="h-5 w-[105px] border border-[#6e6e6e] bg-linear-to-b from-[#ececec] to-[#c6c6c6] pt-px"
          >
            Auto Clip Setup
          </button>
          <PanelButton label="Collapse"><ChevronPairIcon up /></PanelButton>
        </ParamRow>
        <ParamRow id="low-range" label="Low range:" value="0.0000000">
          <RangeSlider label="Low range slider" value={100} filled />
          <PanelButton label="Reset low range"><ClearIcon /></PanelButton>
        </ParamRow>
        <ParamRow id="high-range" label="High range:" value="1.0000000">
          <RangeSlider label="High range slider" value={0} />
          <PanelButton label="Reset high range"><ClearIcon /></PanelButton>
        </ParamRow>
      </div>
      <PanelFooter global />
    </section>
  );
}

/* ---------- desktop ---------- */

function Wallpaper() {
  return (
    <svg
      viewBox="0 0 1617 943"
      preserveAspectRatio="none"
      className="absolute inset-0 h-full w-full"
      aria-hidden="true"
    >
      <defs>
        <linearGradient id="upper" x2="0" y2="1">
          <stop stopColor="#4a4250" />
          <stop offset=".3" stopColor="#55505a" />
          <stop offset=".6" stopColor="#636164" />
          <stop offset="1" stopColor="#6a6a6a" />
        </linearGradient>
        <linearGradient id="lower" gradientUnits="userSpaceOnUse" x1="780" y1="900" x2="1617" y2="860">
          <stop stopColor="#504858" />
          <stop offset=".45" stopColor="#6b6b6b" />
          <stop offset=".62" stopColor="#616062" />
          <stop offset=".85" stopColor="#544c5b" />
          <stop offset="1" stopColor="#473e4e" />
        </linearGradient>
      </defs>
      <rect width="1617" height="943" fill="#404040" />
      <path d="M1083 0h534v330L1223 740H1083z" fill="url(#upper)" />
      <path d="M780 924L1083 670l140 49L1617 325v507l-109 111H800z" fill="url(#lower)" />
      <path d="M1154.500 700v243" stroke="#575757" />
      <path d="M1420.500 0v943" stroke="#e0a878" />
    </svg>
  );
}

function StatusBar() {
  return (
    <footer className="flex h-[21px] items-start gap-1 overflow-hidden bg-[#f0f0f0] pt-0.5 pl-0.5">
      <Grip />
      <DropDown
        label="Current view"
        value="Flat_1s_Bin1_0030"
        className="h-[22px] w-[275px] shrink-0"
        text="font-['DejaVu_Sans_Mono',monospace] text-xs"
        icon={<FrameIcon color="#444" />}
      />
      <button
        type="button"
        aria-label="Previews"
        className="flex h-[22px] w-5 shrink-0 items-center justify-center border border-[#808080] bg-white"
      >
        <svg width="12" height="13" viewBox="0 0 12 13" fill="none" aria-hidden="true">
          <path d="M4 0L0 4v8h4z" fill="#444" />
          <rect x="4" y="1" width="7" height="11" fill="#fff" stroke="#444" strokeWidth="2" />
        </svg>
      </button>
      <span className="w-0" />
      <Grip />
      {[1, 2, 3, 4, 5].map((n) => (
        <button
          key={n}
          type="button"
          aria-label={`Workspace ${n}`}
          className={`relative h-[22px] w-[19px] shrink-0 border border-[#808080] ${n === 3 ? "bg-[#ffae5e]" : ""}`}
        >
          {n === 3 && (
            <>
              <span className="absolute -top-px -right-px size-[5px] bg-[#0a8a0a]" />
              <span className="absolute -right-px bottom-0.5 size-[5px] bg-[#0a8a0a]" />
            </>
          )}
        </button>
      ))}
    </footer>
  );
}

export default function App() {
  return (
    <div className="flex min-h-screen overflow-hidden font-['DejaVu_Sans',sans-serif] text-[11px] text-[#111]">
      <div className="w-0.5 shrink-0 bg-linear-to-b from-[#0c0c16] via-[#1c1c38] to-[#08080e]" />
      <div className="flex min-w-0 flex-1 flex-col">
        <MenuBar />
        <ToolBar />
        <main className="relative flex flex-1">
          <Wallpaper />
          <div className="relative flex min-w-0 flex-1">
            <Dock />
            <div className="flex min-w-0 flex-1 pb-[19px]">
              <ImageWindow />
            </div>
            <div className="-mt-0.5 ml-[7px] w-[527px] shrink-0">
              <ScreenTransferFunction />
              <div className="relative -mt-px w-[414px]">
                <HistogramTransformation />
                <div
                  role="tooltip"
                  className="absolute top-[596px] left-[39px] border border-[#555] bg-black px-2 py-[3px] leading-5 text-white shadow-[2px_2px_2px_rgba(0,0,0,0.5)]"
                >
                  Shadows clipping
                </div>
              </div>
            </div>
          </div>
        </main>
        <StatusBar />
      </div>
    </div>
  );
}
